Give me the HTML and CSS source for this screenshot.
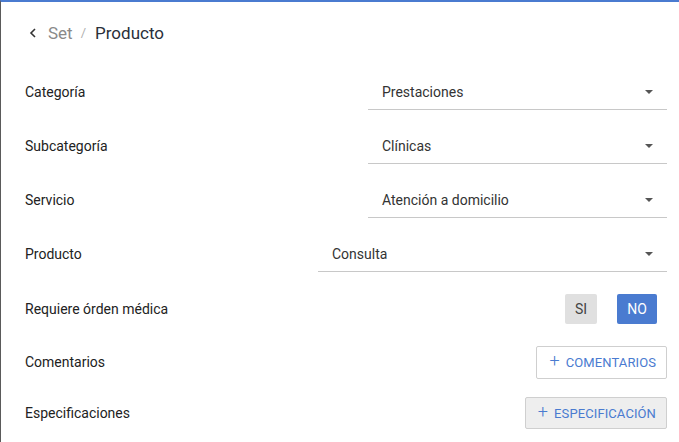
FILE: index.html
```html
<!DOCTYPE html>
<html lang="es">
<head>
<meta charset="utf-8">
<link rel="stylesheet" href="styles.css">
</head>
<body>
<div class="page">
  <header class="crumbs">
    <svg class="back" width="8" height="10" viewBox="0 0 8 10"><path d="M6 1 L2 5 L6 9" fill="none" stroke="#333" stroke-width="1.6"/></svg>
    <span class="crumb-prev">Set</span>
    <span class="crumb-sep">/</span>
    <span class="crumb-cur">Producto</span>
  </header>
  <div class="form">
    <div class="row">
      <span class="label">Categoría</span>
      <div class="select"><span>Prestaciones</span><i class="caret"></i></div>
    </div>
    <div class="row">
      <span class="label">Subcategoría</span>
      <div class="select"><span>Clínicas</span><i class="caret"></i></div>
    </div>
    <div class="row">
      <span class="label">Servicio</span>
      <div class="select"><span>Atención a domicilio</span><i class="caret"></i></div>
    </div>
    <div class="row">
      <span class="label">Producto</span>
      <div class="select wide"><span>Consulta</span><i class="caret"></i></div>
    </div>
    <div class="row row-toggle">
      <span class="label">Requiere órden médica</span>
      <div class="toggle">
        <button class="tbtn si">SI</button>
        <button class="tbtn no">NO</button>
      </div>
    </div>
    <div class="row row-com">
      <span class="label">Comentarios</span>
      <button class="add"><span class="plus">+</span>COMENTARIOS</button>
    </div>
    <div class="row row-esp">
      <span class="label">Especificaciones</span>
      <button class="add filled"><span class="plus">+</span>ESPECIFICACIÓN</button>
    </div>
  </div>
</div>
</body>
</html>
```

FILE: styles.css
```css
html, body {
  margin: 0;
  padding: 0;
  background: #fff;
}
body {
  font-family: Roboto, "Liberation Sans", sans-serif;
  color: #222;
}
.page {
  width: 679px;
  height: 442px;
  box-sizing: border-box;
  border-left: 1px solid #5a5a5a;
  border-top: 2px solid #4a7bd0;
  overflow: hidden;
}
.crumbs {
  height: 63px;
  display: flex;
  align-items: center;
  padding: 0 0 2px 28px;
  box-sizing: border-box;
  font-size: 17px;
}
.back {
  margin-right: 11px;
}
.crumb-prev {
  color: #8a8a8a;
}
.crumb-sep {
  color: #b0b0b0;
  font-size: 13px;
  margin: 0 9px 0 8px;
}
.crumb-cur {
  color: #2a2f3a;
}
.form {
  padding: 0 12px 0 24px;
}
.row {
  display: flex;
  align-items: center;
  justify-content: space-between;
  height: 54px;
}
.label {
  font-size: 14px;
  color: #222;
}
.select {
  width: 299px;
  height: 36px;
  box-sizing: border-box;
  border-bottom: 1px solid #c8c8c8;
  display: flex;
  align-items: center;
  justify-content: space-between;
  padding: 0 14px 0 14px;
  font-size: 14px;
  color: #333;
}
.select.wide {
  width: 349px;
}
.caret {
  width: 0;
  height: 0;
  border-left: 4px solid transparent;
  border-right: 4px solid transparent;
  border-top: 4px solid #555;
}
.row-toggle {
  height: 56px;
}
.row-com {
  height: 50px;
}
.row-esp {
  height: 52px;
}
.toggle {
  display: flex;
  gap: 20px;
  margin-right: 10px;
}
.tbtn {
  height: 30px;
  border: none;
  border-radius: 2px;
  font-family: inherit;
  font-size: 14px;
  padding: 0;
}
.tbtn.si {
  width: 32px;
  background: #e0e0e0;
  color: #444;
}
.tbtn.no {
  width: 40px;
  background: #4a7bd0;
  color: #fff;
}
.add {
  height: 33px;
  box-sizing: border-box;
  border: 1px solid #cfcfcf;
  border-radius: 2px;
  background: #fff;
  color: #4a7bd0;
  font-family: inherit;
  font-size: 13px;
  padding: 0 10px 0 12px;
  display: flex;
  align-items: center;
  letter-spacing: 0.1px;
}
.add.filled {
  background: #eeeeee;
  height: 32px;
  padding: 0 10px 0 12px;
}
.plus {
  font-size: 18px;
  font-weight: 300;
  margin-right: 6px;
  line-height: 1;
  position: relative;
  top: -1px;
}
```
